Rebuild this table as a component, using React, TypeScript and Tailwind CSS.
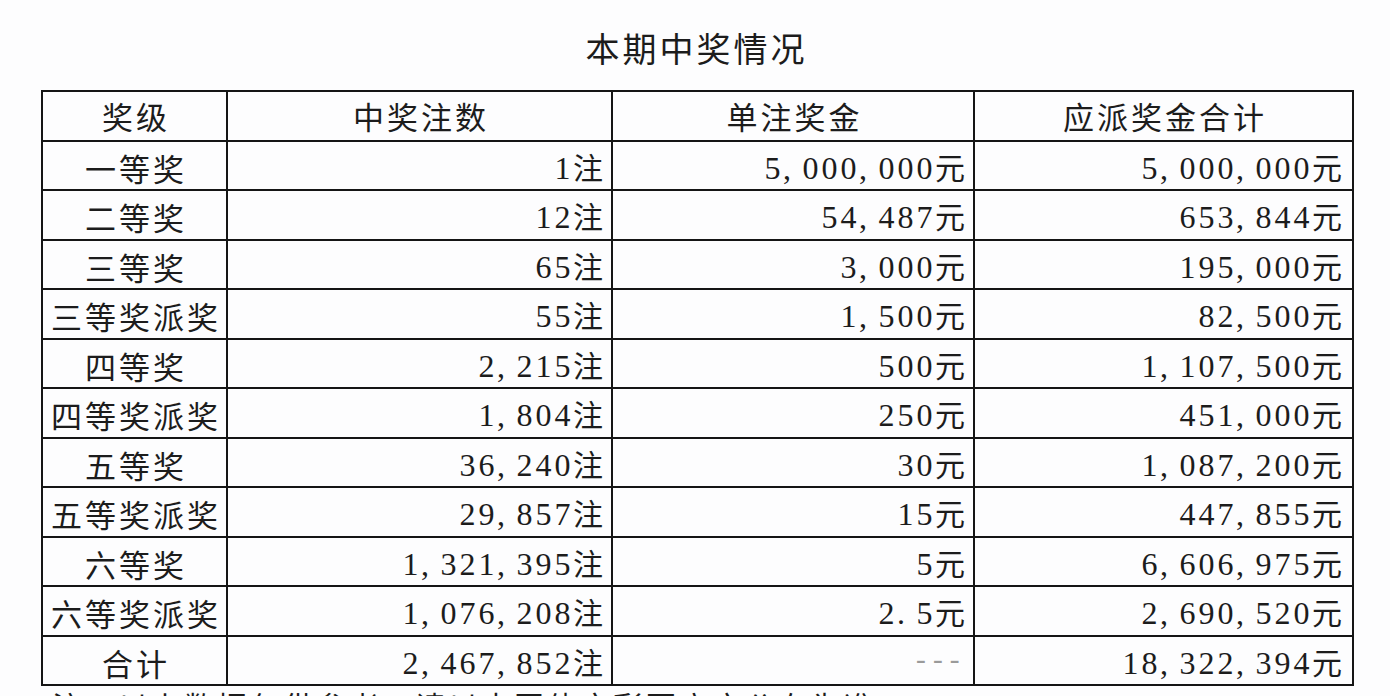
import React from "react";

const rows: [string, string, string, string][] = [
  ["一等奖", "1注", "5,000,000元", "5,000,000元"],
  ["二等奖", "12注", "54,487元", "653,844元"],
  ["三等奖", "65注", "3,000元", "195,000元"],
  ["三等奖派奖", "55注", "1,500元", "82,500元"],
  ["四等奖", "2,215注", "500元", "1,107,500元"],
  ["四等奖派奖", "1,804注", "250元", "451,000元"],
  ["五等奖", "36,240注", "30元", "1,087,200元"],
  ["五等奖派奖", "29,857注", "15元", "447,855元"],
  ["六等奖", "1,321,395注", "5元", "6,606,975元"],
  ["六等奖派奖", "1,076,208注", "2.5元", "2,690,520元"],
  ["合计", "2,467,852注", "---", "18,322,394元"],
];

const cjk = "font-['Noto_Sans_CJK_SC',sans-serif]";
const serif = "font-['Liberation_Serif','Noto_Sans_CJK_SC',serif]";

function Num({ text }: { text: string }) {
  const chars = Array.from(text);
  return (
    <span className="whitespace-nowrap flex items-baseline">
      {chars.map((c, i) => {
        if (/[0-9]/.test(c)) {
          return (
            <span key={i} className={`${serif} inline-block w-[19px] text-center text-[32px]`}>
              {c}
            </span>
          );
        }
        if (c === "," || c === ".") {
          return (
            <span key={i} className={`${serif} inline-block w-[19px] text-left pl-[1px] text-[32px]`}>
              {c}
            </span>
          );
        }
        return (
          <span key={i} className={`${cjk} inline-block text-[30px] pl-[1px]`}>
            {c}
          </span>
        );
      })}
    </span>
  );
}

export default function App() {
  return (
    <div className="w-[1390px] h-[696px] overflow-hidden bg-[#fdfdfe] text-[#1c1c1c]">
      <div className="pt-[28px] flex justify-center">
        <div className={`${cjk} text-[34px] leading-[40px] tracking-[3px] pl-[3px]`}>本期中奖情况</div>
      </div>
      <div className="mt-[22px] ml-[41px] w-[1313px] grid grid-cols-[183px_383px_360px_377px] auto-rows-[47.5px] gap-[2px] border-2 border-[#151515] bg-[#151515]">
        {["奖级", "中奖注数", "单注奖金", "应派奖金合计"].map((h) => (
          <div key={h} className={`bg-[#fdfdfe] flex items-center justify-center ${cjk} text-[31px] tracking-[3px] pl-[3px] leading-none`}>
            {h}
          </div>
        ))}
        {rows.map((r) => (
          <React.Fragment key={r[0]}>
            <div className={`bg-[#fdfdfe] flex items-center justify-center pt-[4px] ${cjk} text-[31px] tracking-[3px] pl-[3px] leading-none whitespace-nowrap`}>
              {r[0]}
            </div>
            <div className="bg-[#fdfdfe] flex items-center justify-end pr-[8px] pt-[4px] leading-none">
              <Num text={r[1]} />
            </div>
            <div className="bg-[#fdfdfe] flex items-center justify-end pr-[8px] pt-[4px] leading-none">
              {r[2] === "---" ? (
                <span className={`font-['Liberation_Mono',monospace] text-[28px] text-[#9a9a9a] pr-[2px]`}>---</span>
              ) : (
                <Num text={r[2]} />
              )}
            </div>
            <div className="bg-[#fdfdfe] flex items-center justify-end pr-[10px] pt-[4px] leading-none">
              <Num text={r[3]} />
            </div>
          </React.Fragment>
        ))}
      </div>
      <div className={`mt-[1px] ml-[52px] ${cjk} text-[30px] leading-[36px] tracking-[3px] whitespace-nowrap`}>
        注：以上数据仅供参考，请以中国体育彩票官方公布为准。
      </div>
    </div>
  );
}
